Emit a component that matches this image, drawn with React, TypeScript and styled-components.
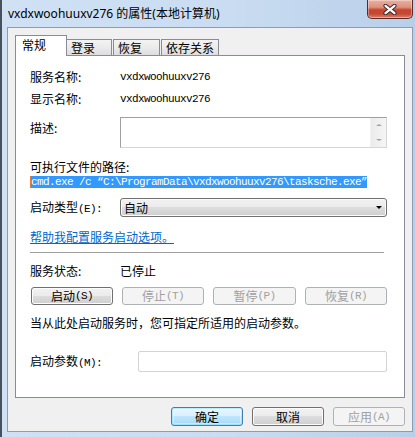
import React from "react";
import styled, { createGlobalStyle, css } from "styled-components";

const CJK = `"Noto Sans CJK SC", "Noto Sans", sans-serif`;
const MONO = `"Liberation Mono", "DejaVu Sans Mono", monospace`;

const Global = createGlobalStyle`
  html, body { margin: 0; padding: 0; background: #fff; }
  body { width: 415px; height: 437px; overflow: hidden; }
  * { box-sizing: border-box; }
`;

const Frame = styled.div`
  width: 415px;
  height: 437px;
  display: flex;
  flex-direction: column;
  background: linear-gradient(90deg, #d0e1f4 0%, #c9dcf1 55%, #b9cfe9 100%);
  border-left: 2px solid #46515f;
  padding: 0 2px 5px 5px;
  font-family: ${CJK};
  font-size: 12px;
  color: #000;
`;

const TitleBar = styled.div`
  height: 27px;
  display: flex;
  align-items: flex-start;
  flex: none;
`;

const Title = styled.div`
  font-family: "Noto Sans", "Noto Sans CJK SC", sans-serif;
  font-size: 12px;
  line-height: 16px;
  padding: 6px 0 0 1px;
  color: #000;
`;

const CloseBtn = styled.div`
  margin-left: auto;
  width: 46px;
  height: 19px;
  border: 1px solid #5b2a25;
  border-top: none;
  border-radius: 0 0 5px 5px;
  background: linear-gradient(
    180deg,
    #eab0a3 0%,
    #de907e 40%,
    #c6452f 55%,
    #c44a34 78%,
    #d98570 100%
  );
  box-shadow: inset 0 0 0 1px rgba(255, 255, 255, 0.35);
  display: flex;
  align-items: center;
  justify-content: center;
`;

const Client = styled.div`
  flex: 1;
  display: flex;
  flex-direction: column;
  background: #f0f0f0;
  border: 1px solid #8a9db4;
  padding: 7px 7px 5px 7px;
`;

const TabStrip = styled.div`
  height: 20px;
  display: flex;
  align-items: flex-end;
  flex: none;
`;

const Tab = styled.div<{ $active?: boolean; $w: number; $ml?: number }>`
  width: ${(p) => p.$w}px;
  margin-left: ${(p) => p.$ml ?? 0}px;
  border: 1px solid #898c95;
  border-bottom: none;
  white-space: nowrap;
  ${(p) =>
    p.$active
      ? css`
          height: 21px;
          margin-bottom: -1px;
          background: #fff;
          position: relative;
          z-index: 2;
          line-height: 16px;
          padding: 1px 0 0 6px;
        `
      : css`
          height: 16px;
          background: linear-gradient(180deg, #f3f3f3 0%, #ebebeb 50%, #dddddd 100%);
          line-height: 15px;
          padding: 0 0 0 4px;
        `}
`;

const Panel = styled.div`
  height: 343px;
  flex: none;
  background: #fff;
  border: 1px solid #898c95;
  padding: 0 17px 0 14px;
  display: flex;
  flex-direction: column;
  line-height: 16px;
`;

const Row = styled.div<{ $mt: number; $h: number; $top?: boolean }>`
  display: flex;
  align-items: ${(p) => (p.$top ? "flex-start" : "center")};
  margin-top: ${(p) => p.$mt}px;
  height: ${(p) => p.$h}px;
  flex: none;
`;

const Label = styled.div<{ $w?: number; $pt?: number }>`
  width: ${(p) => p.$w ?? 90}px;
  flex: none;
  padding-top: ${(p) => p.$pt ?? 0}px;
  white-space: nowrap;
`;

const Mn = styled.span`
  font-family: ${MONO};
  font-size: 11px;
  letter-spacing: -0.6px;
`;

const Value = styled.span`
  font-family: ${MONO};
  font-size: 11px;
  letter-spacing: -0.6px;
  white-space: pre;
`;

const DescBox = styled.div`
  flex: 1;
  height: 31px;
  border: 1px solid;
  border-color: #a0a0a0 #d6d6d6 #d6d6d6 #a0a0a0;
  background: #fff;
  display: flex;
  justify-content: flex-end;
`;

const ScrollBar = styled.div`
  width: 16px;
  display: flex;
  flex-direction: column;
  background: linear-gradient(90deg, #ebebeb, #f5f5f5);
  border-left: 1px solid #f2f2f2;
`;

const ScrollCell = styled.div`
  flex: 1;
  display: flex;
  align-items: center;
  justify-content: center;
`;

const Arrow = styled.span<{ $dir: "up" | "down"; $color: string; $size: number }>`
  width: 0;
  height: 0;
  border-left: ${(p) => p.$size}px solid transparent;
  border-right: ${(p) => p.$size}px solid transparent;
  ${(p) =>
    p.$dir === "up"
      ? css`border-bottom: ${p.$size - 0.5}px solid ${p.$color};`
      : css`border-top: ${p.$size - 0.5}px solid ${p.$color};`}
`;

const PathText = styled.span`
  font-family: ${MONO};
  font-size: 11px;
  letter-spacing: -0.6px;
  line-height: 12px;
  height: 12px;
  white-space: pre;
  background: #3399ff;
  color: #fff;
  border-left: 1px solid #e07b39;
`;

const Select = styled.div`
  flex: 1;
  height: 19px;
  border: 1px solid #707070;
  border-radius: 3px;
  background: linear-gradient(180deg, #f2f2f2 0%, #ebebeb 49%, #dddddd 50%, #cfcfcf 100%);
  box-shadow: inset 0 0 0 1px #fbfbfb;
  display: flex;
  align-items: center;
  justify-content: space-between;
  padding: 0 4px 0 3px;
`;

const Link = styled.a`
  color: #0066cc;
  text-decoration: underline;
  cursor: pointer;
`;

const Separator = styled.div`
  margin: 7px 3px 0 0;
  height: 1px;
  background: #a0a0a0;
  flex: none;
`;

const ServiceButtons = styled.div`
  display: flex;
  justify-content: space-between;
  padding-left: 1px;
  margin-top: 8px;
  height: 18px;
  flex: none;
`;

type Variant = "normal" | "default" | "disabled";

const Button = styled.div<{ $variant: Variant; $w: number; $h: number }>`
  width: ${(p) => p.$w}px;
  height: ${(p) => p.$h}px;
  border-radius: 3px;
  display: flex;
  align-items: center;
  justify-content: center;
  white-space: nowrap;
  line-height: 14px;
  ${(p) =>
    p.$variant === "normal"
      ? css`
          border: 1px solid #707070;
          background: linear-gradient(180deg, #f2f2f2 0%, #ebebeb 49%, #dddddd 50%, #cfcfcf 100%);
          box-shadow: inset 0 0 0 1px #fcfcfc;
          color: #000;
        `
      : p.$variant === "default"
      ? css`
          border: 1px solid #3c7fb1;
          background: linear-gradient(180deg, #eaf6fd 0%, #d9f0fc 49%, #bee6fd 50%, #a7d9f5 100%);
          box-shadow: inset 0 0 0 1px #48d8fb55, inset 0 0 0 2px #ffffff66;
          color: #000;
        `
      : css`
          border: 1px solid #adb2b5;
          background: #f4f4f4;
          color: #a0a0a0;
        `}
`;

const ParamInput = styled.div`
  flex: 1;
  height: 21px;
  border: 1px solid #d2d4d7;
  border-radius: 2px;
  background: #fff;
`;

const DialogButtons = styled.div`
  display: flex;
  justify-content: flex-end;
  gap: 9px;
  margin-top: 9px;
  height: 19px;
  flex: none;
`;

export default function App() {
  return (
    <>
      <Global />
      <Frame>
        <TitleBar>
          <Title>vxdxwoohuuxv276 的属性(本地计算机)</Title>
          <CloseBtn>
            <svg width="14" height="11" viewBox="0 0 14 11">
              <path d="M2.5 1.8 L11.5 9.2 M11.5 1.8 L2.5 9.2" stroke="#3d2a28" strokeWidth="4.2" strokeLinecap="round" fill="none" />
              <path d="M2.5 1.8 L11.5 9.2 M11.5 1.8 L2.5 9.2" stroke="#ffffff" strokeWidth="2.2" strokeLinecap="round" fill="none" />
            </svg>
          </CloseBtn>
        </TitleBar>
        <Client>
          <TabStrip>
            <Tab $active $w={52}>常规</Tab>
            <Tab $w={46} $ml={-1}>登录</Tab>
            <Tab $w={47} $ml={1}>恢复</Tab>
            <Tab $w={58} $ml={1}>依存关系</Tab>
          </TabStrip>
          <Panel>
            <Row $mt={13} $h={16}>
              <Label>服务名称:</Label>
              <Value>vxdxwoohuuxv276</Value>
            </Row>
            <Row $mt={6} $h={16}>
              <Label>显示名称:</Label>
              <Value>vxdxwoohuuxv276</Value>
            </Row>
            <Row $mt={10} $h={31} $top>
              <Label $pt={3}>描述:</Label>
              <DescBox>
                <ScrollBar>
                  <ScrollCell>
                    <Arrow $dir="up" $color="#a3a3a3" $size={3} />
                  </ScrollCell>
                  <ScrollCell>
                    <Arrow $dir="down" $color="#a3a3a3" $size={3} />
                  </ScrollCell>
                </ScrollBar>
              </DescBox>
            </Row>
            <Row $mt={11} $h={16}>
              <Label $w={200}>可执行文件的路径:</Label>
            </Row>
            <Row $mt={1} $h={12}>
              <PathText>{"cmd.exe /c “C:\\ProgramData\\vxdxwoohuuxv276\\tasksche.exe”"}</PathText>
            </Row>
            <Row $mt={10} $h={19}>
              <Label>
                启动类型<Mn>(E):</Mn>
              </Label>
              <Select>
                <span>自动</span>
                <Arrow $dir="down" $color="#000" $size={3.5} />
              </Select>
            </Row>
            <Row $mt={12} $h={16}>
              <Link>帮助我配置服务启动选项。</Link>
            </Row>
            <Separator />
            <Row $mt={10} $h={16}>
              <Label>服务状态:</Label>
              <span>已停止</span>
            </Row>
            <ServiceButtons>
              <Button $variant="normal" $w={82} $h={18}>
                启动<Mn>(S)</Mn>
              </Button>
              <Button $variant="disabled" $w={82} $h={18}>
                停止<Mn>(T)</Mn>
              </Button>
              <Button $variant="disabled" $w={83} $h={18}>
                暂停<Mn>(P)</Mn>
              </Button>
              <Button $variant="disabled" $w={82} $h={18}>
                恢复<Mn>(R)</Mn>
              </Button>
            </ServiceButtons>
            <Row $mt={10} $h={16}>
              <span>当从此处启动服务时，您可指定所适用的启动参数。</span>
            </Row>
            <Row $mt={20} $h={21}>
              <Label $w={108}>
                启动参数<Mn>(M):</Mn>
              </Label>
              <ParamInput />
            </Row>
          </Panel>
          <DialogButtons>
            <Button $variant="default" $w={72} $h={19}>
              确定
            </Button>
            <Button $variant="normal" $w={72} $h={19}>
              取消
            </Button>
            <Button $variant="disabled" $w={72} $h={19}>
              应用<Mn>(A)</Mn>
            </Button>
          </DialogButtons>
        </Client>
      </Frame>
    </>
  );
}
